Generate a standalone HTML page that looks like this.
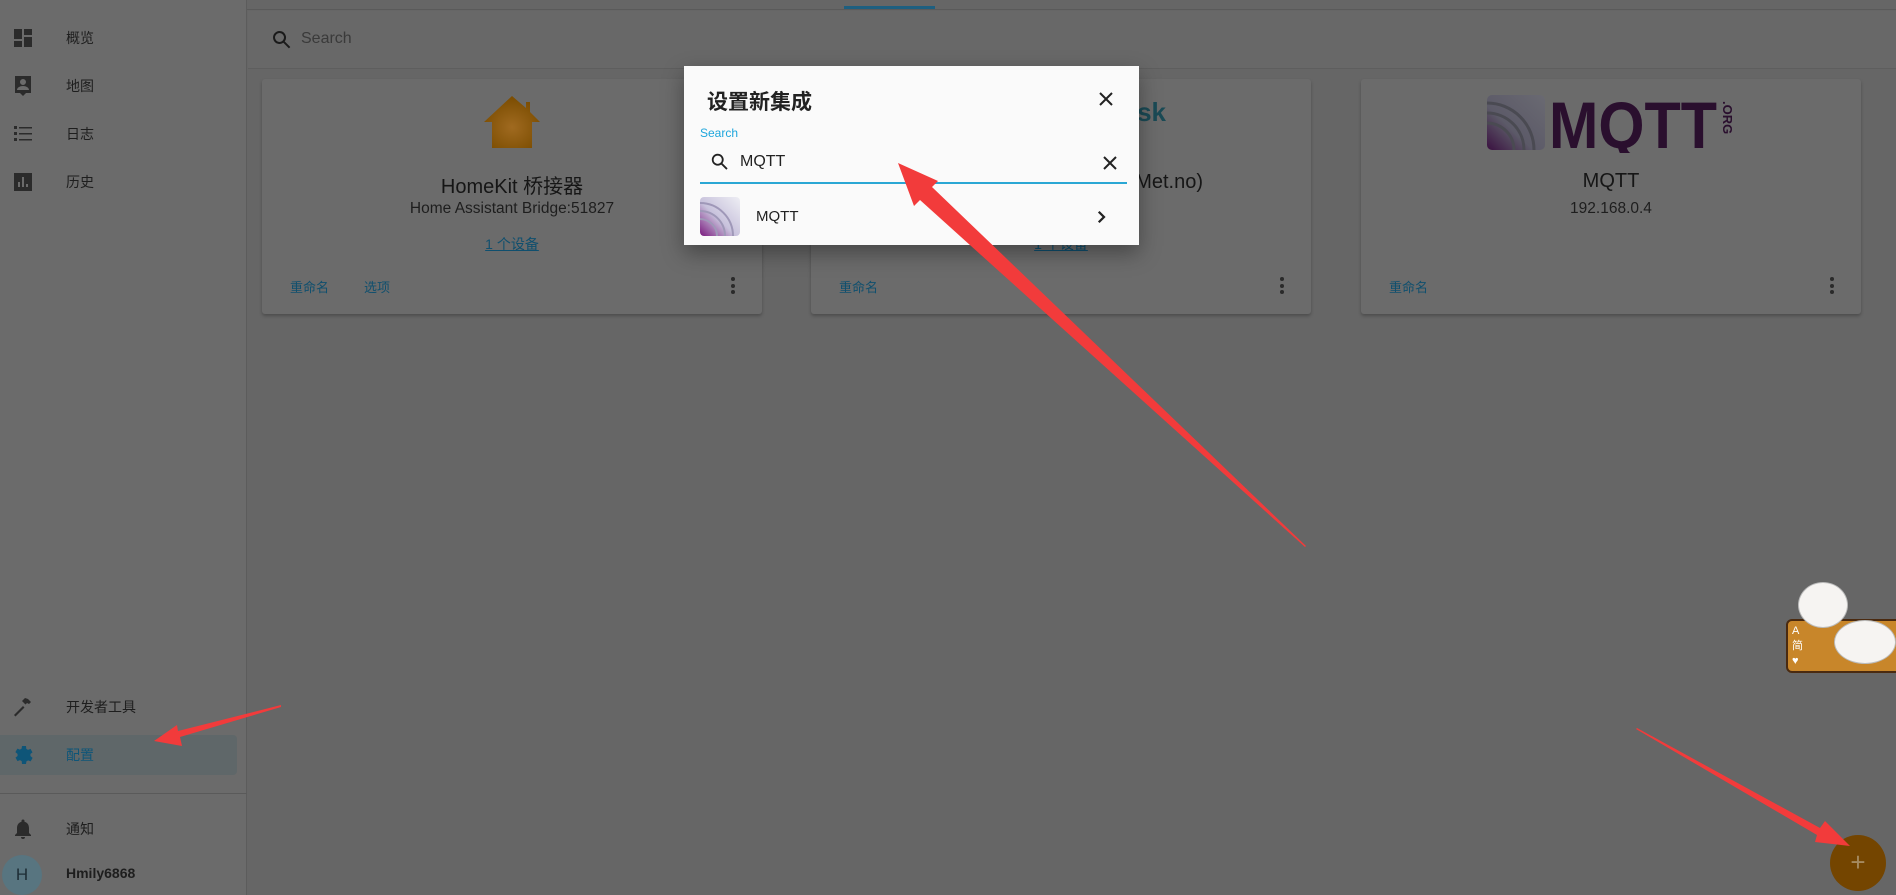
<!DOCTYPE html>
<html><head><meta charset="utf-8">
<style>
*{margin:0;padding:0;box-sizing:border-box}
body{width:1896px;height:895px;overflow:hidden;background:#666;font-family:"Liberation Sans","Noto Sans CJK SC",sans-serif;position:relative}
.abs{position:absolute}
.side{left:0;top:0;width:247px;height:895px;background:#6b6b6b;border-right:1px solid #5c5c5c}
.nav{position:absolute;left:0;width:247px;font-size:14px;color:#1e1e1e}
.nav svg{position:absolute;left:11px;top:-11px}
.nav span{position:absolute;left:66px;top:-9px}
.card{background:#6b6b6b;border-radius:3px;box-shadow:0 2px 3px rgba(0,0,0,.25);overflow:hidden}
.ttl{position:absolute;width:100%;text-align:center;font-size:20px;color:#161616}
.sub{position:absolute;width:100%;text-align:center;font-size:15.5px;color:#1e1e1e}
.btn{position:absolute;font-size:13px;color:#0f4f6e}
.dots{position:absolute;width:4px}
.dots i{display:block;width:4px;height:4px;border-radius:2px;background:#2a2a2a;margin-bottom:2.5px}
</style></head><body>
<div class="abs" style="left:247px;top:0;width:1649px;height:10px;background:#666;border-bottom:1px solid #5a5a5a"></div>
<div class="abs" style="left:844px;top:6px;width:91px;height:3px;background:#1d5f80"></div>
<div class="abs" style="left:248px;top:11px;width:1648px;height:58px;background:#686868;border-bottom:1px solid #5e5e5e"></div>
<svg class="abs" style="left:270px;top:28px" width="24" height="24" viewBox="0 0 24 24"><path fill="#1a1a1a" d="M9.5 3a6.5 6.5 0 0 1 5.2 10.4l5.6 5.6-1.4 1.4-5.6-5.6A6.5 6.5 0 1 1 9.5 3zm0 2a4.5 4.5 0 1 0 0 9 4.5 4.5 0 0 0 0-9z"/></svg>
<div class="abs" style="left:301px;top:30px;font-size:16px;color:#3a3a3a">Search</div>

<div class="abs side"></div>
<div class="nav" style="top:37px"><svg width="24" height="24" viewBox="0 0 24 24"><path fill="#2b2b2b" d="M3 3h8v10H3zM13 3h8v6h-8zM13 11h8v10h-8zM3 15h8v6H3z"/></svg><span>概览</span></div>
<div class="nav" style="top:85px"><svg width="24" height="24" viewBox="0 0 24 24"><path fill="#2b2b2b" d="M4 2h16v17h-5l-3 3-3-3H4zM12 5a3 3 0 1 0 0 6 3 3 0 0 0 0-6zM6 16h12c0-2.5-3-4-6-4s-6 1.5-6 4z"/></svg><span>地图</span></div>
<div class="nav" style="top:133px"><svg width="24" height="24" viewBox="0 0 24 24"><path fill="#2b2b2b" d="M3 4h3v3H3zM8 5h13v1.5H8zM3 10h3v3H3zM8 11h13v1.5H8zM3 16h3v3H3zM8 17h13v1.5H8z"/></svg><span>日志</span></div>
<div class="nav" style="top:181px"><svg width="24" height="24" viewBox="0 0 24 24"><path fill="#2b2b2b" d="M3 3h18v18H3zM7 12v5h2v-5zm4-5v10h2V7zm4 7v3h2v-3z"/></svg><span>历史</span></div>
<div class="nav" style="top:706px"><svg width="24" height="24" viewBox="0 0 24 24"><path fill="#2b2b2b" d="M3 20l9-9 1.5 1.5-9 9zM11 6l3-3 3 1 3 3-2 2-2-1-1.5 1.5-3-3z"/></svg><span>开发者工具</span></div>
<div class="abs" style="left:0;top:735px;width:237px;height:40px;background:#5f6769;border-radius:0 4px 4px 0"></div>
<div class="nav" style="top:754px;color:#0e5578"><svg width="24" height="24" viewBox="0 0 24 24"><path fill="#0e5578" d="M12 8a4 4 0 1 0 0 8 4 4 0 0 0 0-8zm7.4 5a7 7 0 0 0 0-2l2.1-1.6-2-3.5-2.5 1a7 7 0 0 0-1.7-1L15 3h-4l-.4 2.6a7 7 0 0 0-1.700 1l-2.5-1-2 3.5L6.6 11a7 7 0 0 0 0 2l-2.1 1.6 2 3.5 2.5-1a7 7 0 0 0 1.7 1L11 21h4l.4-2.6a7 7 0 0 0 1.7-1l2.5 1 2-3.5z"/></svg><span>配置</span></div>
<div class="abs" style="left:0;top:793px;width:247px;height:1px;background:#5a5a5a"></div>
<div class="nav" style="top:828px"><svg width="24" height="24" viewBox="0 0 24 24"><path fill="#2b2b2b" d="M12 22a2 2 0 0 0 2-2h-4a2 2 0 0 0 2 2zm6-6v-5c0-3-1.6-5.6-4.5-6.3V4a1.5 1.5 0 0 0-3 0v.7C7.6 5.4 6 8 6 11v5l-2 2v1h16v-1z"/></svg><span>通知</span></div>
<div class="abs" style="left:2px;top:855px;width:40px;height:40px;border-radius:20px;background:#587580;color:#1d2d35;font-size:17px;text-align:center;line-height:40px">H</div>
<div class="abs" style="left:66px;top:865px;font-size:14px;font-weight:bold;color:#1e1e1e">Hmily6868</div>

<div class="abs card" style="left:262px;top:79px;width:500px;height:235px">
 <svg class="abs" style="left:220px;top:15px" width="60" height="56" viewBox="0 0 60 56"><defs><radialGradient id="hg" cx=".5" cy=".6" r=".6"><stop offset="0" stop-color="#a06a20"/><stop offset="1" stop-color="#7a4c00"/></radialGradient></defs><path fill="url(#hg)" d="M30 2L2 28h8v26h40V28h8L48 18V8h-4v6z"/></svg>
 <div class="ttl" style="top:91px">HomeKit 桥接器</div>
 <div class="sub" style="top:121px">Home Assistant Bridge:51827</div>
 <div class="sub" style="top:155px;font-size:14px;color:#0f4f6e;text-decoration:underline">1 个设备</div>
 <div class="btn" style="left:28px;top:198px">重命名</div>
 <div class="btn" style="left:102px;top:198px">选项</div>
 <div class="dots" style="left:469px;top:198px"><i></i><i></i><i></i></div>
</div>
<div class="abs card" style="left:811px;top:79px;width:500px;height:235px">
 <div class="abs" style="right:145px;top:18px;font-size:26px;font-weight:bold;color:#1a4a55">Meteorologisk</div>
 <div class="abs" style="right:108px;top:92px;font-size:20px;color:#161616;white-space:nowrap">Home (Met.no)</div>
 <div class="sub" style="top:155px;font-size:14px;color:#0f4f6e;text-decoration:underline">1 个设备</div>
 <div class="btn" style="left:28px;top:198px">重命名</div>
 <div class="dots" style="left:469px;top:198px"><i></i><i></i><i></i></div>
</div>
<div class="abs card" style="left:1361px;top:79px;width:500px;height:235px">
 <svg class="abs" style="left:126px;top:14px" width="250" height="60" viewBox="0 0 250 60"><defs><linearGradient id="mg" x1="0" y1="1" x2="1" y2="0"><stop offset="0" stop-color="#3a1040"/><stop offset=".4" stop-color="#5c5a68"/><stop offset="1" stop-color="#6a6a72"/></linearGradient></defs><rect x="0" y="2" width="58" height="55" rx="5" fill="url(#mg)"/><path d="M0 20a37 37 0 0 1 37 37M0 10a47 47 0 0 1 47 47M0 30a27 27 0 0 1 27 27" stroke="#4a4a52" stroke-width="3" fill="none"/><text x="62" y="55" font-family="Liberation Sans" font-weight="bold" font-size="66" fill="#2a0f2e" textLength="168" lengthAdjust="spacingAndGlyphs">MQTT</text><text x="236" y="8" transform="rotate(90 236 8)" font-family="Liberation Sans" font-weight="bold" font-size="13" fill="#2a0f2e">.ORG</text></svg>
 <div class="ttl" style="top:91px">MQTT</div>
 <div class="sub" style="top:121px">192.168.0.4</div>
 <div class="btn" style="left:28px;top:198px">重命名</div>
 <div class="dots" style="left:469px;top:198px"><i></i><i></i><i></i></div>
</div>

<div class="abs" style="left:684px;top:66px;width:455px;height:179px;background:#fafafa;box-shadow:0 8px 20px rgba(0,0,0,.35)">
 <div class="abs" style="left:23px;top:20px;font-size:21px;font-weight:bold;color:#222">设置新集成</div>
 <svg class="abs" style="left:410px;top:21px" width="24" height="24" viewBox="0 0 24 24"><path stroke="#222" stroke-width="2" d="M6 6l12 12M18 6L6 18"/></svg>
 <div class="abs" style="left:16px;top:60px;font-size:12px;color:#1ea6dc">Search</div>
 <svg class="abs" style="left:25px;top:85px" width="22" height="22" viewBox="0 0 24 24"><path fill="#222" d="M9.5 3a6.5 6.5 0 0 1 5.2 10.4l5.6 5.6-1.4 1.4-5.6-5.6A6.5 6.5 0 1 1 9.5 3zm0 2a4.5 4.5 0 1 0 0 9 4.5 4.5 0 0 0 0-9z"/></svg>
 <div class="abs" style="left:56px;top:87px;font-size:16px;color:#222">MQTT</div>
 <svg class="abs" style="left:414px;top:85px" width="24" height="24" viewBox="0 0 24 24"><path stroke="#222" stroke-width="2" d="M6 6l12 12M18 6L6 18"/></svg>
 <div class="abs" style="left:16px;top:116px;width:427px;height:2px;background:#2aa7d4"></div>
 <svg class="abs" style="left:16px;top:131px" width="40" height="39" viewBox="0 0 40 39"><defs><linearGradient id="ig" x1="0" y1="1" x2="1" y2="0"><stop offset="0" stop-color="#7a1a7e"/><stop offset=".45" stop-color="#c8c2dc"/><stop offset="1" stop-color="#eeeef4"/></linearGradient></defs><rect width="40" height="39" rx="4" fill="url(#ig)"/><path d="M0 14a25 25 0 0 1 25 25M0 6a33 33 0 0 1 33 33M0 22a17 17 0 0 1 17 17" stroke="#9f98b8" stroke-width="2" fill="none"/></svg>
 <div class="abs" style="left:72px;top:142px;font-size:15px;color:#222">MQTT</div>
 <svg class="abs" style="left:408px;top:142px" width="18" height="18" viewBox="0 0 24 24"><path stroke="#222" stroke-width="3" fill="none" d="M9 5l7 7-7 7"/></svg>
</div>

<div class="abs" style="left:1786px;top:619px;width:120px;height:54px;background:#c8862a;border:2px solid #4a2a10;border-radius:6px"></div>
<div class="abs" style="left:1792px;top:624px;font-size:11px;color:#fff;line-height:15px">A<br>简<br>♥</div>
<div class="abs" style="left:1798px;top:582px;width:50px;height:46px;border-radius:50%;background:#f6f4f2;border:1px solid #bbb"></div>
<div class="abs" style="left:1834px;top:620px;width:62px;height:44px;border-radius:50%;background:#f6f4f2;border:1px solid #bbb"></div>

<div class="abs" style="left:1830px;top:835px;width:56px;height:56px;border-radius:28px;background:#744500;color:#a58a60;font-size:26px;text-align:center;line-height:54px">+</div>

<svg class="abs" style="left:0;top:0" width="1896" height="895">
 <polygon fill="#f23b3b" points="1306,546 1305,547 920,200 914,206 898,163 938,181 932,187"/>
 <polygon fill="#f23b3b" points="281,705 281,707 180,737 182,746 154,741 177,725 178,731"/>
 <polygon fill="#f23b3b" points="1636,729 1637,728 1820,828 1825,821 1850,846 1815,842 1817,835"/>
</svg>
</body></html>
